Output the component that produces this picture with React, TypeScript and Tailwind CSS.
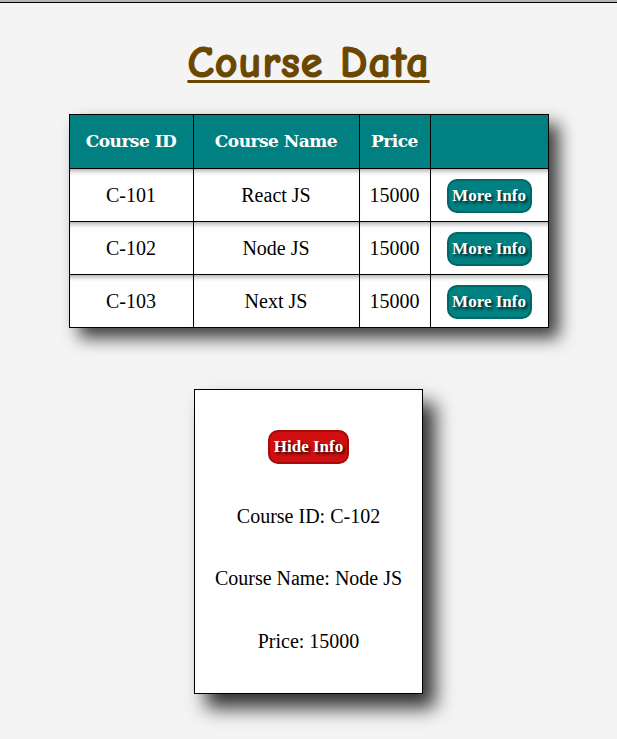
import React from 'react';

const courses = [
  { id: 'C-101', name: 'React JS', price: 15000 },
  { id: 'C-102', name: 'Node JS', price: 15000 },
  { id: 'C-103', name: 'Next JS', price: 15000 },
];

const cellShadow = 'shadow-[inset_0_6px_5px_-4px_rgba(0,0,0,0.35)]';

export default function App() {
  const selected = courses[1];

  return (
    <div className="min-h-[739px] bg-[#f4f4f4] border-t-[2px] border-[#b5b5b5]">
      <div className="h-px bg-black" />
      <div className="flex flex-col items-center pt-[36px]">
        <h1 className="text-[44px] leading-[48px] font-bold text-[#6b4700] underline underline-offset-[3px] decoration-[3px] [-webkit-text-stroke:1.2px_#6b4700] tracking-[1px] font-['Comic_Sans_MS','Comic_Neue',cursive]">
          Course Data
        </h1>

        <table className="mt-[27px] w-[480px] border-collapse border border-black bg-white shadow-[10px_10px_16px_rgba(0,0,0,0.75)] font-['Liberation_Serif',serif]">
          <thead>
            <tr className="bg-[#008080] text-white h-[54px] font-['DejaVu_Serif',serif] text-[17px] font-bold">
              <th className="w-[124px] border border-black tracking-[-0.5px]">Course ID</th>
              <th className="w-[166px] border border-black tracking-[-0.5px]">Course Name</th>
              <th className="w-[71px] border border-black tracking-[-0.5px]">Price</th>
              <th className="border border-black" />
            </tr>
          </thead>
          <tbody>
            {courses.map((c) => (
              <tr key={c.id} className="h-[53px] text-[20px] text-black text-center">
                <td className={`border border-black ${cellShadow}`}>{c.id}</td>
                <td className={`border border-black ${cellShadow}`}>{c.name}</td>
                <td className={`border border-black ${cellShadow}`}>{c.price}</td>
                <td className={`border border-black ${cellShadow}`}>
                  <button className="w-[85px] h-[34px] mt-[2px] rounded-[10px] bg-[#008080] border-2 border-[#006666] text-white text-[17px] font-bold font-['Liberation_Serif',serif] [text-shadow:2px_2px_3px_rgba(0,0,0,0.8)]">
                    More Info
                  </button>
                </td>
              </tr>
            ))}
          </tbody>
        </table>

        <div className="mt-[61px] w-[229px] h-[305px] bg-white border border-black shadow-[12px_14px_18px_rgba(0,0,0,0.8)] flex flex-col items-center pt-[40px] font-['Liberation_Serif',serif] text-[20px] leading-[24px] text-black">
          <button className="w-[81px] h-[34px] rounded-[10px] bg-[#d01010] border-2 border-[#a80a0a] text-white text-[17px] font-bold font-['Liberation_Serif',serif] [text-shadow:2px_2px_3px_rgba(0,0,0,0.8)]">
            Hide Info
          </button>
          <p className="mt-[40px]">Course ID: {selected.id}</p>
          <p className="mt-[38px]">Course Name: {selected.name}</p>
          <p className="mt-[39px]">Price: {selected.price}</p>
        </div>
      </div>
    </div>
  );
}
